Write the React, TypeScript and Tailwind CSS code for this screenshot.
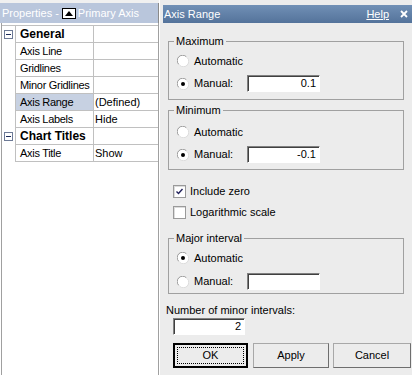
import React from "react";

const font = { fontFamily: '"Liberation Sans", Arial, sans-serif' };

function Radio({ checked }: { checked?: boolean }) {
  return (
    <svg width="12" height="12" viewBox="0 0 12 12" className="shrink-0">
      <circle cx="6" cy="6" r="5.5" fill="#fff" />
      <path d="M1.8 9.4 A5.2 5.2 0 0 1 9.4 1.8" stroke="#9a9a9a" strokeWidth="1" fill="none" />
      <path d="M2.6 10.2 A5.2 5.2 0 0 0 10.2 2.6" stroke="#dcdcdc" strokeWidth="1" fill="none" />
      {checked && <circle cx="6" cy="6" r="2" fill="#000" />}
    </svg>
  );
}

function Check({ checked }: { checked?: boolean }) {
  return (
    <div className="w-[13px] h-[13px] shrink-0 bg-white border border-[#9a9a9a] shadow-[inset_1px_1px_0_#dcdcdc] flex items-center justify-center">
      {checked && (
        <svg width="9" height="9" viewBox="0 0 9 9">
          <polyline points="1.5,4.5 3.5,6.5 7.5,2" stroke="#20205a" strokeWidth="1.4" fill="none" />
        </svg>
      )}
    </div>
  );
}

function Input({ value, w }: { value: string; w: string }) {
  return (
    <div
      className={`${w} h-[17px] bg-white border border-t-[#808080] border-l-[#808080] border-b-white border-r-white shadow-[inset_1px_1px_0_#404040] flex items-center justify-end pr-[3px] text-[11px] leading-none text-black`}
    >
      {value}
    </div>
  );
}

function Btn({ label, w, def }: { label: string; w: string; def?: boolean }) {
  return (
    <div
      className={
        def
          ? `${w} h-[25px] bg-[#ececec] border-2 border-black outline-1 outline-dotted outline-black -outline-offset-[5px] flex items-center justify-center text-[11px] text-black`
          : `${w} h-[25px] bg-[#ececec] border border-[#a8a8a8] border-b-[#6e6e6e] border-r-[#6e6e6e] flex items-center justify-center text-[11px] text-black`
      }
    >
      {label}
    </div>
  );
}

function Expander() {
  return (
    <div className="w-[9px] h-[9px] border border-[#6d7a96] bg-white flex items-center justify-center">
      <div className="w-[5px] h-[1px] bg-[#1d2b5a]" />
    </div>
  );
}

type Row = { name: string; value?: string; cat?: boolean; sel?: boolean };
const rows: Row[] = [
  { name: "General", cat: true },
  { name: "Axis Line" },
  { name: "Gridlines" },
  { name: "Minor Gridlines" },
  { name: "Axis Range", value: "(Defined)", sel: true },
  { name: "Axis Labels", value: "Hide" },
  { name: "Chart Titles", cat: true },
  { name: "Axis Title", value: "Show" },
];

export default function App() {
  return (
    <div className="w-[412px] h-[375px] flex bg-[#f0f0f0] overflow-hidden text-black" style={font}>
      {/* Left properties panel */}
      <div className="w-[159px] h-full flex flex-col pt-[3px]">
        <div className="h-[20px] bg-[#b9c6dc] border-r border-[#8a8a8a] flex items-center pl-[2px] text-[11px] text-white whitespace-nowrap">
          <span>Properties -</span>
          <div className="ml-[3px] mr-[2px] w-[14px] h-[11px] border border-black bg-white flex items-center justify-center">
            <svg width="8" height="5" viewBox="0 0 8 5">
              <polygon points="0,5 4,0 8,5" fill="#000" />
            </svg>
          </div>
          <span>Primary Axis</span>
        </div>
        <div className="flex-1 bg-white border-r border-[#a0a0a0] pl-[1px]">
          <div className="h-full border-l border-[#a0a0a0] pt-[2px]">
            <div className="border-t border-[#c0c0c0]">
              {rows.map((r) => (
                <div key={r.name} className="flex h-[17px] text-[11px]">
                  <div className="w-[14px] border-r border-[#c0c0c0] flex items-center justify-center">
                    {r.cat && <Expander />}
                  </div>
                  <div
                    className={`w-[78px] border-r border-b border-[#c0c0c0] flex items-center pl-[4px] whitespace-nowrap overflow-hidden ${
                      r.sel ? "bg-[#c7d1e2]" : ""
                    } ${r.cat ? "font-bold text-[12px]" : "tracking-[-0.3px]"}`}
                  >
                    {r.name}
                  </div>
                  <div className="w-[64px] border-b border-[#c0c0c0] flex items-center pl-[1px] whitespace-nowrap">
                    {r.value}
                  </div>
                </div>
              ))}
            </div>
          </div>
        </div>
      </div>

      {/* Dialog */}
      <div className="flex-1 h-full flex flex-col pt-[5px] pl-[3px] bg-[#ececec] border-l border-white">
        <div className="h-[18px] bg-gradient-to-b from-[#7190b6] to-[#54739b] flex items-center pl-[1px] pr-[4px] text-[11px] text-white">
          <span>Axis Range</span>
          <span className="ml-auto underline">Help</span>
          <svg width="8" height="8" viewBox="0 0 8 8" className="ml-[11px]">
            <path d="M1 1 L7 7 M7 1 L1 7" stroke="#fff" strokeWidth="1.8" />
          </svg>
        </div>

        {/* Maximum */}
        <fieldset className="ml-[5px] w-[236px] mt-[11px] border border-[#a0a0a0] pb-[7px]">
          <legend className="ml-[5px] px-[2px] text-[11px] leading-[14px]">Maximum</legend>
          <div className="mt-[5px] pl-[8px] h-[16px] flex items-center text-[11px]">
            <Radio />
            <span className="ml-[5px]">Automatic</span>
          </div>
          <div className="mt-[6px] pl-[8px] h-[17px] flex items-center text-[11px]">
            <Radio checked />
            <span className="ml-[5px] w-[53px]">Manual:</span>
            <Input value="0.1" w="w-[73px]" />
          </div>
        </fieldset>

        {/* Minimum */}
        <fieldset className="ml-[5px] w-[236px] mt-[3px] border border-[#a0a0a0] pb-[6px]">
          <legend className="ml-[5px] px-[2px] text-[11px] leading-[14px]">Minimum</legend>
          <div className="mt-[7px] pl-[8px] h-[16px] flex items-center text-[11px]">
            <Radio />
            <span className="ml-[5px]">Automatic</span>
          </div>
          <div className="mt-[6px] pl-[8px] h-[17px] flex items-center text-[11px]">
            <Radio checked />
            <span className="ml-[5px] w-[53px]">Manual:</span>
            <Input value="-0.1" w="w-[73px]" />
          </div>
        </fieldset>

        <div className="mt-[15px] pl-[10px] h-[13px] flex items-center text-[11px]">
          <Check checked />
          <span className="ml-[4px]">Include zero</span>
        </div>
        <div className="mt-[8px] pl-[10px] h-[13px] flex items-center text-[11px]">
          <Check />
          <span className="ml-[4px]">Logarithmic scale</span>
        </div>

        {/* Major interval */}
        <fieldset className="ml-[5px] w-[236px] mt-[12px] border border-[#a0a0a0] pb-[3px]">
          <legend className="ml-[5px] px-[2px] text-[11px] leading-[14px]">Major interval</legend>
          <div className="mt-[5px] pl-[8px] h-[16px] flex items-center text-[11px]">
            <Radio checked />
            <span className="ml-[5px]">Automatic</span>
          </div>
          <div className="mt-[7px] pl-[8px] h-[17px] flex items-center text-[11px]">
            <Radio />
            <span className="ml-[5px] w-[53px]">Manual:</span>
            <Input value="" w="w-[73px]" />
          </div>
        </fieldset>

        <div className="mt-[10px] pl-[3px] text-[11px] leading-[13px]">Number of minor intervals:</div>
        <div className="mt-[1px] pl-[10px]">
          <Input value="2" w="w-[72px]" />
        </div>

        <div className="mt-[8px] pl-[10px] flex">
          <Btn label="OK" w="w-[75px]" def />
          <div className="ml-[5px]">
            <Btn label="Apply" w="w-[76px]" />
          </div>
          <div className="ml-[4px]">
            <Btn label="Cancel" w="w-[78px]" />
          </div>
        </div>
      </div>
    </div>
  );
}
